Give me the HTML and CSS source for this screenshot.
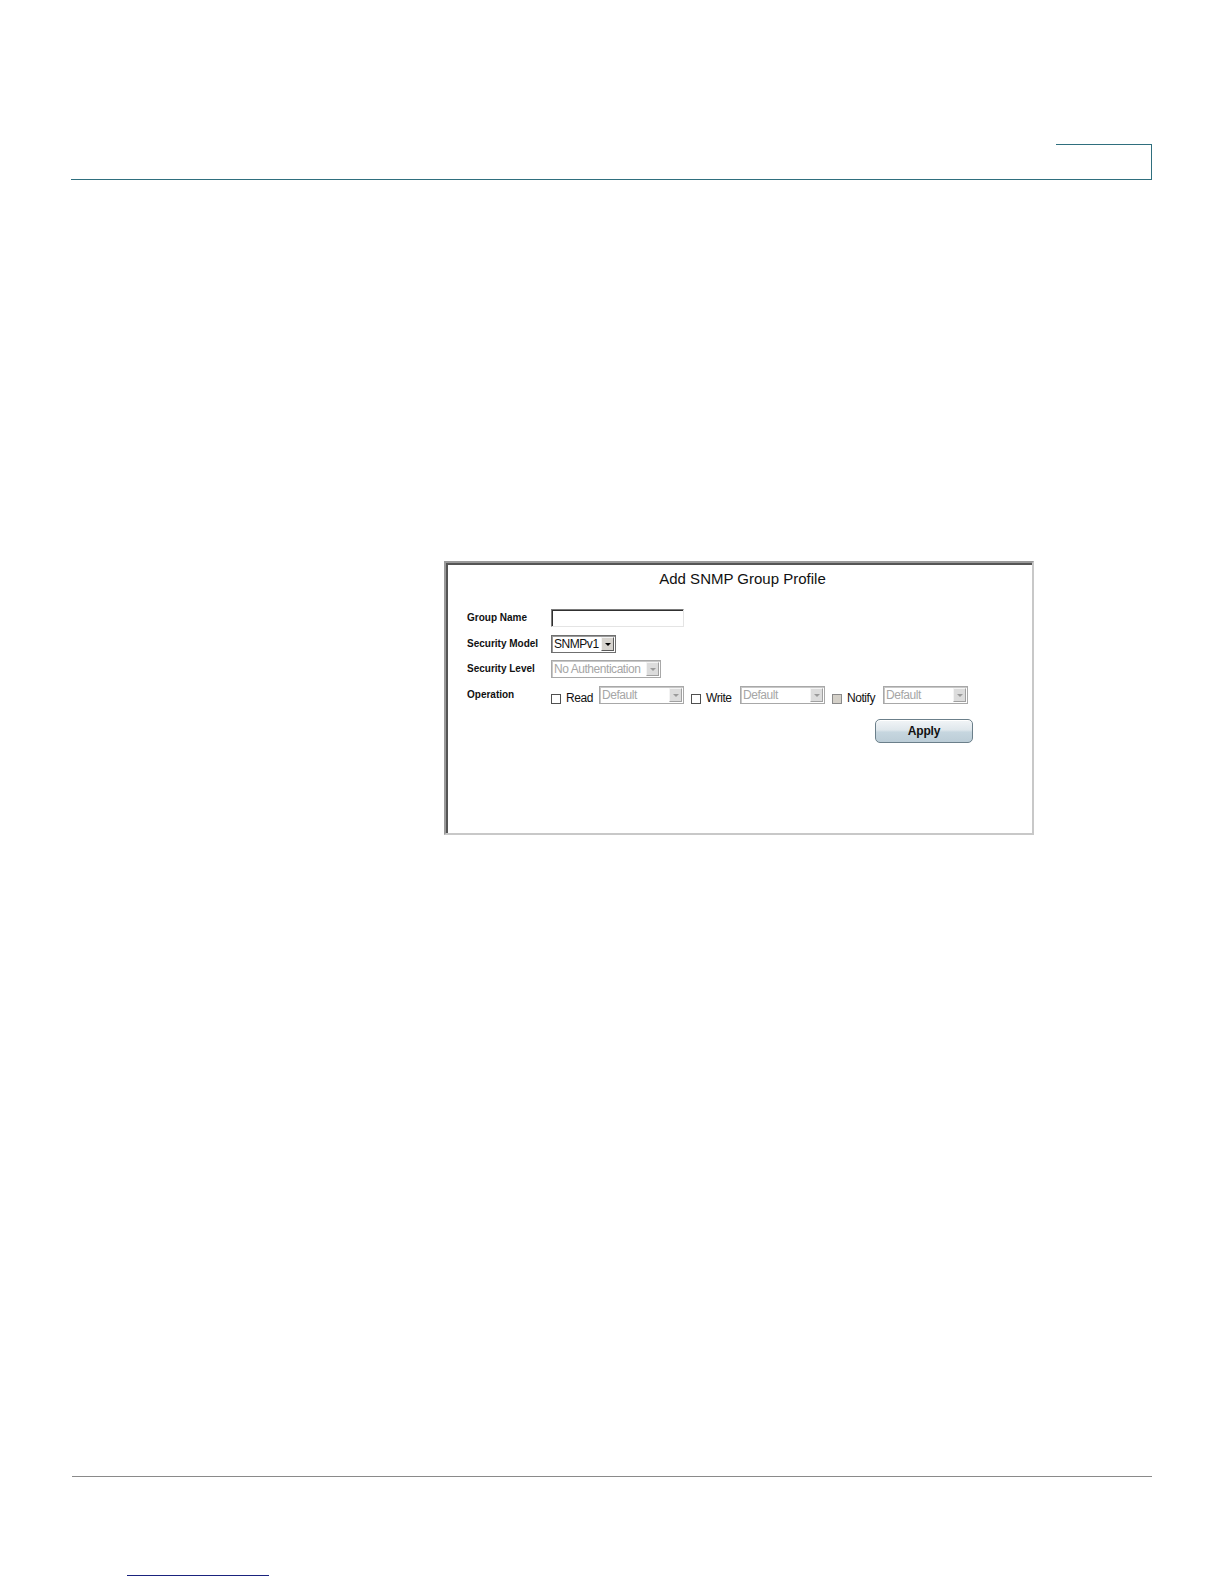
FILE: index.html
```html
<!DOCTYPE html>
<html>
<head>
<meta charset="utf-8">
<title>Add SNMP Group Profile</title>
<link rel="stylesheet" href="styles.css">
</head>
<body>
<div class="header">
  <div class="tab"></div>
</div>

<div class="figure">
  <div class="fig-title">Add SNMP Group Profile</div>
  <div class="form">
    <div class="row row-first">
      <div class="label">Group Name</div>
      <div class="textbox"></div>
    </div>
    <div class="row">
      <div class="label">Security Model</div>
      <div class="select w-model"><span class="value">SNMPv1</span><span class="arrow"><span class="tri"></span></span></div>
    </div>
    <div class="row">
      <div class="label">Security Level</div>
      <div class="select w-level disabled"><span class="value">No Authentication</span><span class="arrow"><span class="tri"></span></span></div>
    </div>
    <div class="row row-op">
      <div class="label">Operation</div>
      <div class="ops">
        <span class="check"></span><span class="op-text t-read">Read</span>
        <div class="select w-op disabled"><span class="value">Default</span><span class="arrow"><span class="tri"></span></span></div>
        <span class="check gap-l"></span><span class="op-text t-write">Write</span>
        <div class="select w-op disabled"><span class="value">Default</span><span class="arrow"><span class="tri"></span></span></div>
        <span class="check check-off gap-l"></span><span class="op-text t-notify">Notify</span>
        <div class="select w-op disabled"><span class="value">Default</span><span class="arrow"><span class="tri"></span></span></div>
      </div>
    </div>
  </div>
  <div class="actions">
    <span class="btn">Apply</span>
  </div>
</div>

<div class="footer-rule"></div>
<div class="footer-link"></div>
</body>
</html>
```

FILE: styles.css
```css
* { box-sizing: border-box; }

html, body {
  margin: 0;
  padding: 0;
  background: #ffffff;
}

body {
  width: 1224px;
  font-family: "Liberation Sans", Arial, sans-serif;
  color: #000;
}

/* page header */
.header {
  margin: 0 72px 0 71px;
  padding-top: 144px;
  border-bottom: 1px solid #2f6f7e;
  display: flex;
  justify-content: flex-end;
}

.tab {
  width: 96px;
  height: 35px;
  border-top: 1px solid #2f6f7e;
  border-right: 1px solid #2f6f7e;
}

/* screenshot figure */
.figure {
  margin: 381px 0 0 444px;
  width: 590px;
  height: 274px;
  border-style: solid;
  border-width: 2px;
  border-color: #9a9a9a #c8c8c8 #c8c8c8 #9a9a9a;
  box-shadow: inset 2px 2px 0 #555555;
  background: #fff;
}

.fig-title {
  padding: 7px 0 0 7px;
  text-align: center;
  font-size: 15px;
  line-height: 18px;
  color: #111;
}

.form {
  margin-top: 17px;
  padding-left: 21px;
}

.row {
  display: flex;
  align-items: center;
  height: 25px;
}

.row-first {
  height: 26px;
}

.row-op {
  height: 28px;
}

.label {
  width: 84px;
  font-size: 10px;
  font-weight: bold;
  line-height: 12px;
  color: #111;
}

.textbox {
  width: 133px;
  height: 18px;
  background: #fff;
  border-style: solid;
  border-width: 1px;
  border-color: #7a7a7a #e4e4e4 #e4e4e4 #7a7a7a;
  box-shadow: inset 1px 1px 0 #303030;
}

.select {
  display: flex;
  align-items: center;
  height: 18px;
  background: #fff;
  border: 1px solid #6f6f6f;
  box-shadow: inset 1px 1px 0 #9a9a9a;
  font-family: "Liberation Sans", Arial, sans-serif;
  font-size: 12px;
  letter-spacing: -0.45px;
  line-height: 14px;
  color: #111;
  padding-left: 2px;
}

.select .value {
  flex: 1;
  white-space: nowrap;
  overflow: hidden;
}

.select .arrow {
  flex: none;
  width: 13px;
  height: 14px;
  margin-right: 1px;
  background: #d6d3ce;
  border-style: solid;
  border-width: 1px;
  border-color: #f4f4f4 #5a5a5a #5a5a5a #f4f4f4;
  display: flex;
  align-items: center;
  justify-content: center;
}

.select .tri {
  width: 0;
  height: 0;
  border-left: 3px solid transparent;
  border-right: 3px solid transparent;
  border-top: 3px solid #000;
  margin-top: 1px;
}

.select.disabled {
  border-color: #a8a8a8;
  box-shadow: inset 1px 1px 0 #c8c8c8;
  color: #a6a6a6;
}

.select.disabled .arrow {
  background: #dcdcdc;
  border-color: #f4f4f4 #a0a0a0 #a0a0a0 #f4f4f4;
}

.select.disabled .tri {
  border-top-color: #9a9a9a;
}

.w-model { width: 65px; }
.w-level { width: 110px; }
.w-op { width: 85px; }

.ops {
  display: flex;
  align-items: flex-end;
}

.check {
  width: 10px;
  height: 10px;
  border: 1px solid #505050;
  background: #fff;
  flex: none;
}

.check-off {
  background: #d4d0c8;
  border-color: #8a8a8a;
}

.gap-l { margin-left: 7px; }

.op-text {
  font-family: "Liberation Sans", Arial, sans-serif;
  font-size: 12px;
  letter-spacing: -0.45px;
  line-height: 12px;
  color: #111;
  padding-left: 5px;
  white-space: nowrap;
}

.t-read { width: 38px; }
.t-write { width: 39px; }
.t-notify { width: 41px; }

.actions {
  margin-top: 10px;
  padding-left: 429px;
  display: flex;
}

.btn {
  width: 98px;
  height: 24px;
  border: 1px solid #6b7f8a;
  border-radius: 5px;
  background: linear-gradient(#f2f5f7 0%, #dfe7ec 45%, #c6d6df 55%, #bccdd7 100%);
  box-shadow: inset 0 1px 0 #ffffff;
  font-family: "Liberation Sans", Arial, sans-serif;
  font-weight: bold;
  font-size: 12px;
  letter-spacing: -0.2px;
  line-height: 22px;
  text-align: center;
  color: #111;
}

/* footer */
.footer-rule {
  margin: 641px 72px 0 72px;
  border-top: 1px solid #8a8a8a;
}

.footer-link {
  margin: 98px 0 0 127px;
  width: 142px;
  border-top: 1px solid #1a237e;
}
```
